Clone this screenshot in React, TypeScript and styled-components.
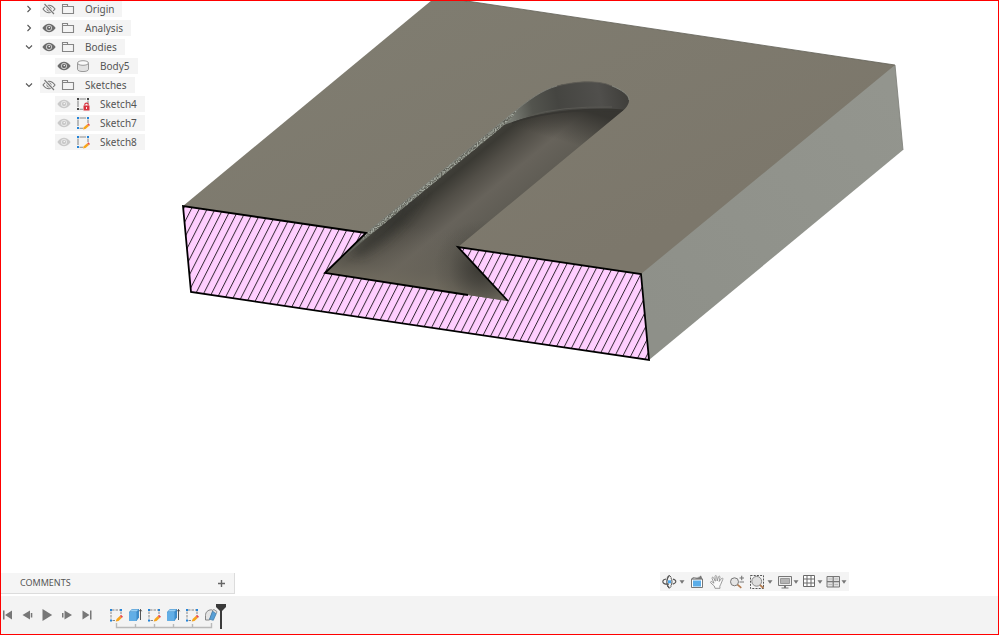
import React from "react";
import styled, { createGlobalStyle } from "styled-components";

const GlobalStyle = createGlobalStyle`
  * { box-sizing: border-box; }
  body { margin: 0; background: #ffffff; }
  button { font: inherit; color: inherit; border: 0; padding: 0; margin: 0; background: none; cursor: pointer; }
  svg { display: block; }
`;

const Page = styled.div`
  display: flex;
  flex-direction: column;
  min-height: 100vh;
  border: 1px solid #ff0000;
  background: #ffffff;
  color: #555555;
  font-family: "Noto Sans", "Open Sans", sans-serif;
  font-size: 10px;
  line-height: 16px;
`;

const Viewport = styled.main`
  position: relative;
  flex: 1;
  display: flex;
  flex-direction: column;
  justify-content: space-between;
  padding-bottom: 2px;
`;

const Scene = styled.svg`
  position: absolute;
  inset: 0;
  width: 100%;
  height: 100%;
`;

const Tree = styled.ul`
  position: relative;
  list-style: none;
  margin: 0;
  padding: 0 0 0 21px;
  display: flex;
  flex-direction: column;
  align-items: flex-start;
  gap: 3px;
`;

const TreeItem = styled.li<{ $child?: boolean }>`
  display: flex;
  align-items: center;
  gap: 4px;
  padding-left: ${(p) => (p.$child ? 33 : 0)}px;
`;

const Chevron = styled.button`
  display: flex;
  align-items: center;
  justify-content: center;
  width: 14px;
  height: 16px;
`;

const Entry = styled.div`
  display: flex;
  align-items: center;
  height: 16px;
  padding: 0 8px 0 2px;
  background: #f4f4f4;
`;

const EyeButton = styled.button`
  width: 14px;
  margin-right: 5px;
`;

const Label = styled.span`
  margin-left: 10px;
  white-space: nowrap;
`;

const BottomBar = styled.div`
  position: relative;
  display: flex;
  justify-content: space-between;
  align-items: flex-start;
`;

const Comments = styled.section`
  display: flex;
  align-items: center;
  justify-content: space-between;
  width: 234px;
  height: 21px;
  margin-top: 1px;
  padding: 0 8px 0 19px;
  background: #f5f5f5;
  border-right: 1px solid #dcdcdc;
  border-bottom: 1px solid #dcdcdc;
`;

const CommentsTitle = styled.h2`
  margin: 0;
  font-size: 9px;
  font-weight: 400;
`;

const AddButton = styled.button`
  width: 9px;
  height: 9px;
`;

const NavBar = styled.div`
  display: flex;
  align-items: center;
  gap: 4px;
  height: 19px;
  margin-right: 14.9%;
  padding: 0 2px 0 1px;
  background: #f4f4f4;
`;

const NavGroup = styled.div<{ $gap: number }>`
  display: flex;
  gap: ${(p) => p.$gap}px;
`;

const NavButton = styled.button<{ $gap?: number }>`
  display: flex;
  align-items: center;
  gap: ${(p) => p.$gap ?? 0}px;
`;

const Timeline = styled.footer`
  display: flex;
  align-items: flex-start;
  height: 38px;
  padding-top: 7px;
  background: #f3f3f3;
`;

const Playback = styled.div`
  display: flex;
  gap: 6px;
  padding-top: 5px;
`;

const Features = styled.div`
  display: flex;
  flex-direction: column;
  margin-left: 13px;
  padding-top: 4px;
`;

const FeatureList = styled.div`
  display: flex;
  gap: 3px;
`;

const Marker = styled.button`
  width: 10px;
  margin-left: -3px;
`;

function Svg({ w = 16, h = 16, children }: { w?: number; h?: number; children: React.ReactNode }) {
  return (
    <svg width={w} height={h} viewBox={`0 0 ${w} ${h}`} fill="none" aria-hidden="true">
      {children}
    </svg>
  );
}

function ChevronIcon({ open }: { open?: boolean }) {
  return (
    <Svg w={8} h={8}>
      <path d={open ? "M1 2.5L4 5.5L7 2.5" : "M2.5 1L5.5 4L2.5 7"} stroke="#555" strokeWidth="1.1" />
    </Svg>
  );
}

type EyeState = "on" | "off" | "dim";

function Eye({ state }: { state: EyeState }) {
  if (state === "off") {
    return (
      <Svg w={14} h={12}>
        <path d="M1 6C3 3.2 5 2.2 7 2.2S11 3.2 13 6C11 8.8 9 9.8 7 9.8S3 8.8 1 6Z" stroke="#777" strokeWidth="1.1" />
        <circle cx="7" cy="6" r="2.1" stroke="#777" strokeWidth="1" />
        <path d="M2.5 1L12 11" stroke="#f4f4f4" strokeWidth="2.6" />
        <path d="M2.5 1L12 11" stroke="#777" strokeWidth="1.1" />
      </Svg>
    );
  }
  const color = state === "on" ? "#6c6c6c" : "#c9c9c9";
  return (
    <Svg w={14} h={12}>
      <path d="M.4 6C2.4 3 4.8 1.8 7 1.8S11.6 3 13.6 6C11.6 9 9.2 10.2 7 10.2S2.4 9 .4 6Z" fill={color} />
      <circle cx="7" cy="6" r="2.7" stroke="#f4f4f4" strokeWidth=".7" />
      <circle cx="7.3" cy="5.5" r=".8" fill="#f4f4f4" />
    </Svg>
  );
}

function FolderIcon() {
  return (
    <Svg w={14} h={12}>
      <path d="M1.5 10.5V1.5H6.5V3.5H12.5V10.5Z" stroke="#858585" strokeWidth="1.1" />
      <path d="M1.5 3.5H6.5" stroke="#858585" />
    </Svg>
  );
}

function BodyIcon() {
  return (
    <Svg w={14} h={12}>
      <path d="M1.5 3V9.3C1.5 12.3 12.5 12.3 12.5 9.3V3" fill="#e2e2e2" stroke="#999" />
      <ellipse cx="7" cy="3" rx="5.5" ry="2.3" fill="#fafafa" stroke="#999" />
    </Svg>
  );
}

function SketchIcon({ locked }: { locked?: boolean }) {
  const dot = locked ? "#444" : "#2584d8";
  return (
    <Svg w={14} h={14}>
      <path d="M3.5 2H10M2 3.5V10M3.5 12.2H7M12 3.5V7" stroke="#8b8b8b" strokeWidth="1.1" />
      <path d="M1 1H3V3H1ZM11 1H13V3H11ZM1 11H3V13H1Z" fill={dot} />
      {locked ? (
        <>
          <path d="M7.5 8.5H13.5V13.5H7.5Z" fill="#d8323e" />
          <path d="M8.8 8.5V7.5C8.8 5.6 12.2 5.6 12.2 7.5V8.5" stroke="#d8323e" strokeWidth="1.1" />
          <path d="M10.5 10V12" stroke="#fff" strokeWidth=".9" />
        </>
      ) : (
        <>
          <path d="M7 13.6L7.8 11.2L11.2 8.2L13 10.1L9.5 13.1Z" fill="#f8a51b" />
          <path d="M11.2 8.2L12.4 7.2L14 9L13 10.1Z" fill="#e84b4b" />
        </>
      )}
    </Svg>
  );
}

type Node = { name: string; eye: EyeState; kind: "folder" | "body" | "sketch" | "locked"; child?: boolean; open?: boolean };

const nodes: Node[] = [
  { name: "Origin", eye: "off", kind: "folder" },
  { name: "Analysis", eye: "on", kind: "folder" },
  { name: "Bodies", eye: "on", kind: "folder", open: true },
  { name: "Body5", eye: "on", kind: "body", child: true },
  { name: "Sketches", eye: "off", kind: "folder", open: true },
  { name: "Sketch4", eye: "dim", kind: "locked", child: true },
  { name: "Sketch7", eye: "dim", kind: "sketch", child: true },
  { name: "Sketch8", eye: "dim", kind: "sketch", child: true },
];

function NodeIcon({ kind }: { kind: Node["kind"] }) {
  if (kind === "folder") return <FolderIcon />;
  if (kind === "body") return <BodyIcon />;
  return <SketchIcon locked={kind === "locked"} />;
}

function Model() {
  return (
    <Scene viewBox="1 1 997 594" preserveAspectRatio="xMidYMin meet" fill="none" role="img" aria-label="Section view of Body5">
      <defs>
        <linearGradient id="top" gradientUnits="userSpaceOnUse" x1="430" y1="0" x2="560" y2="280">
          <stop offset="0" stopColor="#7f7c70" />
          <stop offset="1" stopColor="#7c776b" />
        </linearGradient>
        <linearGradient id="side" gradientUnits="userSpaceOnUse" x1="650" y1="320" x2="900" y2="100">
          <stop offset="0" stopColor="#8e9089" />
          <stop offset="1" stopColor="#93958e" />
        </linearGradient>
        <linearGradient id="floor" gradientUnits="userSpaceOnUse" x1="366" y1="233" x2="410" y2="286">
          <stop offset="0" stopColor="#45443e" />
          <stop offset=".16" stopColor="#3b3a34" />
          <stop offset=".38" stopColor="#514e47" />
          <stop offset=".68" stopColor="#67635b" />
          <stop offset="1" stopColor="#605d55" />
        </linearGradient>
        <linearGradient id="mouth" gradientUnits="userSpaceOnUse" x1="400" y1="287" x2="410" y2="225">
          <stop offset="0" stopColor="#706b5e" />
          <stop offset=".3" stopColor="#6c675c" stopOpacity=".6" />
          <stop offset="1" stopColor="#6c675c" stopOpacity="0" />
        </linearGradient>
        <radialGradient id="undercut" gradientUnits="userSpaceOnUse" cx="482" cy="268" r="48">
          <stop offset="0" stopColor="#302f2a" stopOpacity=".85" />
          <stop offset=".35" stopColor="#34332e" stopOpacity=".55" />
          <stop offset=".7" stopColor="#34332e" stopOpacity=".15" />
          <stop offset="1" stopColor="#34332e" stopOpacity="0" />
        </radialGradient>
        <linearGradient id="farShade" gradientUnits="userSpaceOnUse" x1="575" y1="108" x2="565" y2="142">
          <stop offset="0" stopColor="#32312d" stopOpacity=".9" />
          <stop offset="1" stopColor="#32312d" stopOpacity="0" />
        </linearGradient>
        <linearGradient id="endWall" gradientUnits="userSpaceOnUse" x1="512" y1="118" x2="630" y2="95">
          <stop offset="0" stopColor="#777a72" />
          <stop offset=".18" stopColor="#53544e" />
          <stop offset=".4" stopColor="#454541" />
          <stop offset=".75" stopColor="#504f4c" />
          <stop offset="1" stopColor="#3e3d39" />
        </linearGradient>
        <pattern id="hatch" patternUnits="userSpaceOnUse" width="7.05" height="7" patternTransform="translate(196 292) rotate(27)">
          <rect width="8" height="7" fill="#ffcfff" />
          <path d="M.5 0V7" stroke="#2c222c" strokeWidth=".9" />
        </pattern>
        <filter id="grain" x="0" y="0" width="1" height="1" colorInterpolationFilters="sRGB">
          <feTurbulence type="fractalNoise" baseFrequency=".7" numOctaves="2" seed="4" />
          <feColorMatrix values="0 0 0 0 .66  0 0 0 0 .68  0 0 0 0 .64  2.5 0 0 0 -.8" />
          <feComposite in2="SourceGraphic" operator="in" />
        </filter>
        <filter id="soft" x="-.4" y="-.4" width="1.8" height="1.8">
          <feGaussianBlur stdDeviation="5" />
        </filter>
        <clipPath id="slot">
          <path d="M325 273L366 233L510 115C530 99 542 90 557 86C572 82 597 79 612 86C622 90 629 95 629 100C629 105 625 109 620 113L458 247L508 301L468 295Z" />
        </clipPath>
      </defs>
      <path d="M890 65L895 65L903 150L649 360L636 274Z" fill="url(#side)" />
      <path d="M183 206L432 0H460L895 65L641 274Z" fill="url(#top)" />
      <path d="M460 0L895 65" stroke="#605e54" strokeWidth=".8" />
      <path d="M895 65L903 150" stroke="#7b7c76" strokeWidth=".8" />
      <path d="M183 206L366 233L325 273L508 300L458 247L641 274L649 360L191 292Z" fill="url(#hatch)" />
      <g clipPath="url(#slot)">
        <path d="M320 70H640V310H320Z" fill="url(#floor)" />
        <path d="M484 143Q530 112 563 108L603 106L640 110V150L590 190H450Z" fill="url(#farShade)" />
        <path d="M320 310V240L366 210H458L520 310Z" fill="url(#mouth)" />
        <path d="M350 252L395 205L425 190Q400 236 362 256Z" fill="#33322d" opacity=".5" filter="url(#soft)" />
        <path d="M420 215H535V320H420Z" fill="url(#undercut)" />
        <path d="M497 128C515 120 540 113 563 110.7S603 107 640 111V70H495Z" fill="url(#endWall)" />
        <path d="M512 123Q555 107 630 111" stroke="#373632" strokeWidth="1.4" />
        <path d="M528 116Q560 106 612 107" stroke="#595853" />
        <path d="M340 260L366 233L510 115L518 109L512 118L496 132L374 232L350 252Z" fill="#5f6058" />
        <path d="M360 242L366 233L510 115L518 109L512 118L496 132L374 232Z" fill="#fff" filter="url(#grain)" />
      </g>
      <path d="M366 233L510 115C530 99 542 90 557 86" stroke="#85877f" strokeWidth=".8" />
      <path d="M557 86C572 82 597 79 612 86" stroke="#64625a" strokeWidth=".8" />
      <path d="M612 86C622 90 629 95 629 100" stroke="#8c8f87" strokeWidth=".8" />
      <path
        d="M508 301L458 247L641 274L649 360L191 292L183 206L366 233L325 273L468 295"
        stroke="#000"
        strokeWidth="1.8"
      />
    </Scene>
  );
}

function Caret() {
  return (
    <Svg w={6} h={6}>
      <path d="M.5 1.2H5.5L3 4.8Z" fill="#777" />
    </Svg>
  );
}

const gray = "#777";

const OrbitIcon = (
  <Svg>
    <path d="M6.3 3.4L8.3 1.3L10.3 3.4M6.3 12.2L8.3 14.3L10.3 12.2" stroke="#555" />
    <path d="M8.3 1.8C6.3 3.3 5.8 5 5.8 7.8S6.3 12.3 8.3 13.8" stroke="#555" strokeWidth="1.1" />
    <path d="M9.8 3.8C10.6 4.8 11 6 11 7.8S10.6 10.8 9.8 11.8" stroke="#555" />
    <path d="M5 5C.8 5.8 .8 9.100 4.600 10.100H8M12 5.100C15.800 6 15.800 9 11.800 10.100" stroke="#555" strokeWidth="1.1" />
    <path d="M7 6.3H10V9.3H7Z" fill="#4aa5ea" />
  </Svg>
);

const LookAtIcon = (
  <Svg>
    <path d="M2.5 5H13.5V13.5H2.5Z" fill="#fff" stroke="#777" />
    <path d="M4 6.5H12V12.5H4Z" fill="#5caee9" />
    <path d="M2 5.2L4 3.2H9L12 1.4L13.5 5.2Z" fill="#777" />
    <path d="M4.5 4.5L11 2.5" stroke="#ddd" strokeWidth=".7" />
  </Svg>
);

const PanIcon = (
  <Svg>
    <path
      d="M6 14.3L5.3 12L1.7 8.8C1.1 8 2 7.1 3 7.8L5 9.2L3 4.2C2.8 3.1 4.1 2.8 4.6 3.8L6.3 7.2L6 2.5C6 1.2 7.5 1.2 7.7 2.5L8.2 7L9.5 2.8C9.9 1.7 11.1 2 11 3.2L10.2 7.5L12.5 4.5C13.2 3.6 14.3 4.3 13.8 5.4L11.8 10.2L10.8 12.2L11 14.3Z"
      fill="#fafafa"
      stroke="#858585"
      strokeWidth=".8"
    />
  </Svg>
);

const ZoomIcon = (
  <Svg>
    <circle cx="5.5" cy="7.8" r="4" fill="#e5e5e5" stroke={gray} />
    <path d="M8.5 10.6L12.3 13.9" stroke="#b37b4f" strokeWidth="1.6" />
    <path d="M10.5 4H15M12.7 1.8V6.2M10.5 8H15" stroke={gray} strokeWidth="1.1" />
  </Svg>
);

const FitIcon = (
  <Svg>
    <path d="M1.5 1.5H14.5V14.5H1.5Z" stroke="#555" strokeDasharray="2 1.2" />
    <circle cx="7.7" cy="7.3" r="4.9" fill="#dedede" stroke="#888" />
    <path d="M11 11L14.5 14.2" stroke="#b37b4f" strokeWidth="1.8" />
  </Svg>
);

const DisplayIcon = (
  <Svg>
    <path d="M1.5 2.5H14.5V11.5H1.5Z" fill="#eee" stroke={gray} />
    <path d="M3.5 4.5H12.5V9.5H3.5Z" fill="#b4b4b4" stroke="#999" />
    <path d="M7 12H9V13.5H11.5V14.5H4.5V13.5H7Z" fill={gray} />
  </Svg>
);

const GridIcon = (
  <Svg>
    <path d="M2.5 1.5H13.5V12.5H2.5ZM2.5 5H13.5M2.5 9H13.5M6 1.5V12.5M10 1.5V12.5" fill="#fff" stroke="#6a6a6a" />
  </Svg>
);

const ViewportsIcon = (
  <Svg>
    <path d="M2 2.5H14.5V13H2Z" fill="#e0e0e0" stroke={gray} />
    <path d="M8.2 2.5V13M2 7.7H14.5" stroke={gray} strokeWidth="1.2" />
    <path d="M3.5 5H7M9.5 5H13M3.5 10.5H7M9.5 10.5H13" stroke="#bbb" />
  </Svg>
);

function ExtrudeIcon() {
  return (
    <Svg>
      <path d="M2 5L5 2H12V10.5L9.5 14H3.5Q2 14 2 12.5Z" fill="#3f8cc9" />
      <path d="M2 5.5Q2 5 3 5H8.7Q9.5 5 9.5 6V13Q9.5 14 8.5 14H3Q2 14 2 13Z" fill="#62aee6" />
      <path d="M3 4.5L5 2.6H11.5L9.5 4.5Z" fill="#9bd0f4" />
      <path d="M13.5 13V2.5M12.3 4.3L13.5 2.5L14.7 4.3" stroke="#444" strokeWidth=".9" />
    </Svg>
  );
}

function TimelineSketchIcon() {
  return (
    <Svg>
      <path d="M4 3H12M3 4.5V12M4.5 13.5H8.5M13 4.5V8" stroke="#858585" strokeDasharray="2.5 1" />
      <path d="M2 2H4V4H2ZM12 2H14V4H12ZM2 12.5H4V14.5H2Z" fill="#2584d8" />
      <path d="M7.8 14.5L8.6 12L11.8 9L13.7 11L10.5 14Z" fill="#f8a51b" />
      <path d="M11.8 9L13.1 7.8L15 9.8L13.7 11Z" fill="#e84b4b" />
    </Svg>
  );
}

function FilletIcon() {
  return (
    <Svg>
      <path d="M2.5 13V8.5C2.5 5 5 2.8 8.5 2.8L10 4L6.5 13Z" fill="#e4e4e4" stroke="#858585" />
      <path d="M6.5 12.3L9.5 4.2L13.3 6.5L10.3 13.3Z" fill="#579fd6" stroke="#3f78a5" strokeWidth=".7" />
      <path d="M9.5 3L11 2.5L14 4.5L13.3 6.5" fill="#ddd" stroke="#858585" strokeWidth=".8" />
    </Svg>
  );
}

const playback: [string, string][] = [
  ["Go to start", "M2 2.5H3.5V11.5H2ZM11 2.5V11.5L4 7Z"],
  ["Step back", "M1.5 7L9 2.5V11.5ZM9.8 5H11.3V9.5H9.8Z"],
  ["Play", "M1.5 1L11.2 7L1.5 13Z"],
  ["Step forward", "M11 7L3.5 2.5V11.5ZM1 5H2.5V9.5H1Z"],
  ["Go to end", "M9 2.5H10.5V11.5H9ZM1.5 2.5V11.5L8.5 7Z"],
];

const features = ["Sketch", "Extrude", "Sketch", "Extrude", "Sketch", "Fillet"];

export default function App() {
  return (
    <>
      <GlobalStyle />
      <Page>
        <Viewport>
          <Model />
          <Tree aria-label="Browser">
            {nodes.map((n) => (
              <TreeItem key={n.name} $child={n.child}>
                {!n.child && (
                  <Chevron aria-label={`${n.open ? "Collapse" : "Expand"} ${n.name}`} aria-expanded={!!n.open}>
                    <ChevronIcon open={n.open} />
                  </Chevron>
                )}
                <Entry>
                  <EyeButton aria-label={`Toggle visibility of ${n.name}`}>
                    <Eye state={n.eye} />
                  </EyeButton>
                  <NodeIcon kind={n.kind} />
                  <Label>{n.name}</Label>
                </Entry>
              </TreeItem>
            ))}
          </Tree>
          <BottomBar>
            <Comments>
              <CommentsTitle>COMMENTS</CommentsTitle>
              <AddButton aria-label="Add comment">
                <Svg w={9} h={9}>
                  <path d="M1 4.5H8M4.5 1V8" stroke="#666" strokeWidth="1.4" />
                </Svg>
              </AddButton>
            </Comments>
            <NavBar role="toolbar" aria-label="Navigation">
              <NavGroup $gap={4}>
                <NavButton $gap={2} aria-label="Orbit">{OrbitIcon}<Caret /></NavButton>
                <NavButton aria-label="Look at">{LookAtIcon}</NavButton>
                <NavButton aria-label="Pan">{PanIcon}</NavButton>
                <NavButton aria-label="Zoom">{ZoomIcon}</NavButton>
                <NavButton $gap={2} aria-label="Fit">{FitIcon}<Caret /></NavButton>
              </NavGroup>
              <NavGroup $gap={2}>
                <NavButton aria-label="Display settings">{DisplayIcon}<Caret /></NavButton>
                <NavButton aria-label="Grid and snaps">{GridIcon}<Caret /></NavButton>
                <NavButton aria-label="Viewports">{ViewportsIcon}<Caret /></NavButton>
              </NavGroup>
            </NavBar>
          </BottomBar>
        </Viewport>
        <Timeline>
          <Playback>
            {playback.map(([name, d]) => (
              <button key={name} aria-label={name}>
                <Svg w={14} h={14}>
                  <path d={d} fill="#777" />
                </Svg>
              </button>
            ))}
          </Playback>
          <Features>
            <FeatureList>
              {features.map((f, i) => (
                <button key={i} aria-label={`${f} feature`}>
                  {f === "Sketch" ? <TimelineSketchIcon /> : f === "Extrude" ? <ExtrudeIcon /> : <FilletIcon />}
                </button>
              ))}
            </FeatureList>
            <Svg w={111} h={7}>
              <path d="M8.5 0V4.5H103.5V0M27.5 1V4M46.5 1V4M65.5 1V4M84.5 1V4" stroke="#b9b9b9" strokeWidth="1.4" />
            </Svg>
          </Features>
          <Marker aria-label="Timeline marker">
            <Svg w={10} h={26}>
              <path d="M0 1H10V4L6 8V26H4V8L0 4Z" fill="#3a3a3a" />
            </Svg>
          </Marker>
        </Timeline>
      </Page>
    </>
  );
}
